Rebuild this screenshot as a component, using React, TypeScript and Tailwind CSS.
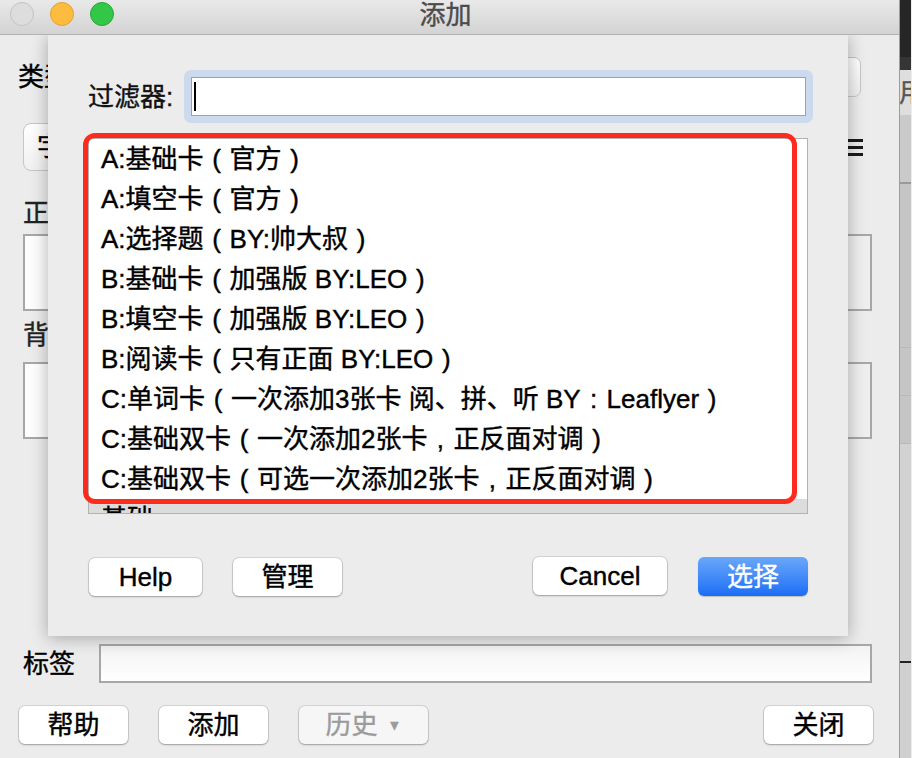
import React from 'react';

const noteTypes = [
  'A:基础卡（官方）',
  'A:填空卡（官方）',
  'A:选择题（BY:帅大叔）',
  'B:基础卡（加强版 BY:LEO）',
  'B:填空卡（加强版 BY:LEO）',
  'B:阅读卡（只有正面 BY:LEO）',
  'C:单词卡（一次添加3张卡 阅、拼、听 BY：Leaflyer）',
  'C:基础双卡（一次添加2张卡，正反面对调）',
  'C:基础双卡（可选一次添加2张卡，正反面对调）',
  '基础',
];

// PingFang centres full-width brackets / comma / colon in their em box
const centred: Record<string, string> = { '（': '(', '）': ')', '，': ',', '：': ':' };

function NoteName({ text }: { text: string }) {
  const parts: React.ReactNode[] = [];
  let buf = '';
  Array.from(text).forEach((ch, i) => {
    if (centred[ch]) {
      if (buf) parts.push(buf);
      buf = '';
      parts.push(
        <span key={i} className="inline-block w-[26px] text-center">
          {centred[ch]}
        </span>
      );
    } else {
      buf += ch;
    }
  });
  if (buf) parts.push(buf);
  return <>{parts}</>;
}

function MacButton({ label, width, primary, disabled }: { label: React.ReactNode; width: string; primary?: boolean; disabled?: boolean }) {
  if (primary) {
    return (
      <button className={`${width} flex h-[39px] items-center justify-center rounded-[6px] bg-gradient-to-b from-[#6aa7f9] to-[#186df5] text-[26px] leading-none text-white shadow-[0_1px_1px_rgba(0,0,0,0.2)]`}>
        {label}
      </button>
    );
  }
  return (
    <button
      className={`${width} flex h-[38px] items-center justify-center rounded-[6px] text-[26px] leading-none shadow-[0_0_0_1px_rgba(0,0,0,0.1),0_1px_2px_rgba(0,0,0,0.25)] ${
        disabled ? 'bg-[#f6f6f6] text-[#9b9b9b]' : 'bg-white text-black'
      }`}
    >
      {label}
    </button>
  );
}

function TitleBar() {
  return (
    <div className="relative z-10 grid h-[35px] grid-cols-[1fr_auto_1fr] items-start border-b border-[#b3b3b3] bg-gradient-to-b from-[#e9e9e9] to-[#d3d3d3]">
      <div className="flex gap-[16px] pl-[10px] pt-[2px]">
        <span className="h-[24px] w-[24px] rounded-full border border-[#c3c3c3] bg-[#dddddd]" />
        <span className="h-[24px] w-[24px] rounded-full border border-[#dea236] bg-[#fdbc40]" />
        <span className="h-[24px] w-[24px] rounded-full border border-[#25a834] bg-[#33c748]" />
      </div>
      <div className="mr-[8px] text-[26px] leading-[31px] text-[#4c4c4c]">添加</div>
      <div />
    </div>
  );
}

function MainWindow() {
  return (
    <div className="flex flex-1 flex-col">
      {/* note type / deck row */}
      <div className="mt-[22px] flex h-[40px] items-center pl-[18px] pr-[38px]">
        <span className="text-[26px] leading-none">类型</span>
        <div className="flex-1" />
        <div className="h-[40px] w-[160px] rounded-[7px] border border-[#c6c6c6] bg-gradient-to-b from-white to-[#efefef]" />
      </div>

      {/* fields row */}
      <div className="mt-[26px] flex h-[48px] items-center justify-between pl-[23px] pr-[36px]">
        <div className="flex h-[48px] w-[140px] items-center rounded-[8px] border border-[#c6c6c6] bg-gradient-to-b from-white to-[#f0f0f0] pl-[13px] text-[26px] leading-none">
          字段...
        </div>
        <div className="flex w-[16px] flex-col gap-[4px]">
          <span className="h-[3px] bg-[#1a1a1a]" />
          <span className="h-[3px] bg-[#1a1a1a]" />
          <span className="h-[3px] bg-[#1a1a1a]" />
        </div>
      </div>

      <div className="mt-[27px] h-[30px] pl-[23px] text-[26px] leading-[30px] text-[#222]">正面</div>
      <div className="ml-[23px] mt-[6px] h-[77px] w-[849px] border-2 border-[#a7a7a7] bg-gradient-to-r from-[#fdfdfd] to-[#eeeeee]" />

      <div className="mt-[9px] h-[30px] pl-[23px] text-[26px] leading-[30px] text-[#222]">背面</div>
      <div className="ml-[23px] mt-[12px] h-[77px] w-[849px] border-2 border-[#a7a7a7] bg-gradient-to-r from-[#fdfdfd] to-[#eeeeee]" />

      <div className="flex-1" />

      {/* tags */}
      <div className="flex h-[39px] items-center pl-[23px]">
        <span className="w-[76px] text-[26px] leading-none">标签</span>
        <div className="h-[39px] w-[773px] border-2 border-[#a7a7a7] bg-gradient-to-b from-[#f3f3f3] to-white" />
      </div>

      {/* bottom buttons */}
      <div className="mt-[23px] flex items-center justify-between pb-[14px] pl-[19px] pr-[26px]">
        <div className="flex gap-[31px]">
          <MacButton label="帮助" width="w-[109px]" />
          <MacButton label="添加" width="w-[109px]" />
          <MacButton
            label={
              <span className="flex items-center gap-[10px]">
                历史<span className="text-[14px]">▼</span>
              </span>
            }
            width="w-[129px]"
            disabled
          />
        </div>
        <MacButton label="关闭" width="w-[109px]" />
      </div>
    </div>
  );
}

function ChooseSheet() {
  return (
    <div className="absolute left-[48px] top-[35px] flex h-[601px] w-[800px] flex-col bg-[#ececec] px-[40px] pt-[35px] shadow-[0_2px_16px_rgba(0,0,0,0.3)]">
      {/* filter */}
      <div className="flex h-[53px] items-center">
        <span className="w-[96px] text-[26px] leading-none text-[#111]">过滤器:</span>
        <div className="-mr-[5px] flex-1 rounded-[7px] bg-[#cdd9ec] p-[7px]">
          <div className="flex h-[39px] items-center border border-[#98a2b4] bg-white pl-[2px]">
            <span className="h-[29px] w-[2px] bg-black" />
          </div>
        </div>
      </div>

      {/* note type list */}
      <div className="relative mt-[15px]">
        <div className="h-[376px] overflow-hidden border border-[#b2b2b2] bg-white">
          {noteTypes.map((name, i) => (
            <div
              key={name + i}
              className={`h-[40px] whitespace-nowrap pl-[12px] text-[26px] leading-[40px] text-black ${
                i === noteTypes.length - 1 ? 'bg-[#dcdcdc]' : ''
              }`}
            >
              <NoteName text={name} />
            </div>
          ))}
        </div>
        {/* annotation */}
        <div className="absolute left-[-5px] top-[-5px] h-[371px] w-[714px] rounded-[12px] border-[5px] border-[#fd2b1e]" />
      </div>

      {/* buttons */}
      <div className="mt-[43px] flex items-center justify-between pl-[1px]">
        <div className="flex gap-[31px]">
          <MacButton label="Help" width="w-[113px]" />
          <MacButton label="管理" width="w-[109px]" />
        </div>
        <div className="flex gap-[31px]">
          <MacButton label="Cancel" width="w-[134px]" />
          <MacButton label="选择" width="w-[110px]" primary />
        </div>
      </div>
    </div>
  );
}

function NeighbourStrip() {
  return (
    <div className="flex w-[11px] flex-col overflow-hidden">
      <div className="h-[57px] bg-[#262626]" />
      <div className="h-[13px] bg-[#353535]" />
      <div className="flex h-[45px] items-center overflow-hidden bg-[#dedede] text-[26px] leading-none text-[#555]">
        <span className="-ml-[1px]">用</span>
      </div>
      <div className="h-[67px] bg-[#cacaca]" />
      <div className="h-[2px] bg-[#9a9a9a]" />
      <div className="h-[163px] bg-[#c5c5c5]" />
      <div className="h-px bg-[#b8b8b8]" />
      <div className="h-[47px] bg-[#c5c5c5]" />
      <div className="h-px bg-[#b8b8b8]" />
      <div className="h-[47px] bg-[#c5c5c5]" />
      <div className="h-px bg-[#b8b8b8]" />
      <div className="h-[217px] bg-[#d2d2d2]" />
      <div className="h-[2px] bg-[#222]" />
      <div className="flex-1 bg-[#d0d0d0]" />
    </div>
  );
}

export default function App() {
  return (
    <div className="flex h-[758px] w-[912px] overflow-hidden bg-[#ececec] font-['Liberation_Sans','Noto_Sans_CJK_SC',sans-serif] text-black [-webkit-text-stroke:0.4px_currentColor]">
      <div className="relative flex w-[900px] flex-col border-r border-[#9c9c9c]">
        <TitleBar />
        <MainWindow />
        <ChooseSheet />
      </div>
      <NeighbourStrip />
    </div>
  );
}
